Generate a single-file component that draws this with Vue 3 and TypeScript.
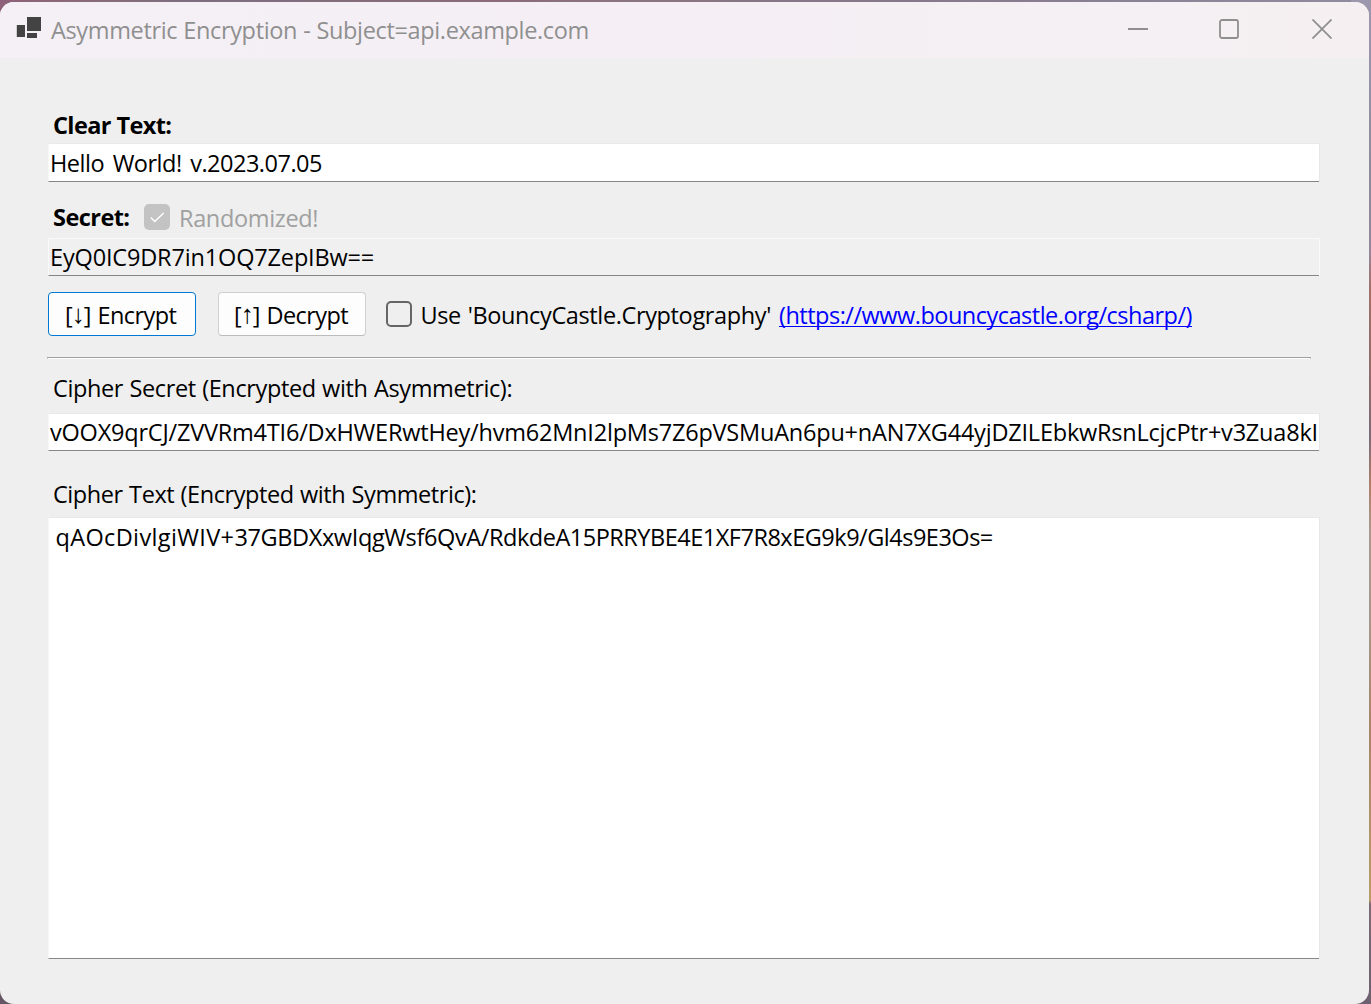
<script setup lang="ts">
import { ref } from 'vue'

const subject = 'api.example.com'
const clearText = ref('Hello World! v.2023.07.05')
const secret = ref('EyQ0IC9DR7in1OQ7ZepIBw==')
const cipherSecret = ref(
  'vOOX9qrCJ/ZVVRm4TI6/DxHWERwtHey/hvm62MnI2lpMs7Z6pVSMuAn6pu+nAN7XG44yjDZILEbkwRsnLcjcPtr+v3Zua8kI',
)
const cipherText = ref(['qAOcDivlgiWIV+', '37GBDXxwIqgWsf6QvA/', 'RdkdeA15PRRYBE4E1XF7R8xEG9k9/Gl4s9E3Os='])
</script>

<template>
  <div class="desktop">
    <div class="window">
      <header class="titlebar">
        <svg class="app-icon" width="26" height="24" viewBox="0 0 26 24">
          <rect x="0.8" y="11" width="8.2" height="12" />
          <rect x="11" y="3" width="14" height="14" />
          <rect x="11" y="19" width="10" height="5" />
        </svg>
        <span class="title">Asymmetric Encryption - Subject={{ subject }}</span>
        <div class="controls">
          <svg width="20" height="20" viewBox="0 0 20 20"><path d="M0 10H20" /></svg>
          <svg width="20" height="20" viewBox="0 0 20 20"><rect x="1" y="1" width="18" height="18" rx="2" /></svg>
          <svg width="20" height="20" viewBox="0 0 20 20"><path d="M0.5 0.5L19.5 19.5M19.5 0.5L0.5 19.5" /></svg>
        </div>
      </header>

      <main class="client">
        <div class="label bold clear-label">Clear Text:</div>
        <div class="field clear-field"><span class="clear-value">{{ clearText }}</span></div>

        <div class="secret-row">
          <span class="bold secret-label">Secret:</span>
          <span class="check checked">
            <svg width="26" height="26" viewBox="0 0 26 26"><path d="M6.8 13.6L10.8 17.6L19.6 9" /></svg>
          </span>
          <span class="randomized">Randomized!</span>
        </div>
        <div class="field readonly"><span class="secret-value">{{ secret }}</span></div>

        <div class="actions">
          <button class="btn primary">
            <span>[</span><span class="arrow">↓</span><span>]</span><span class="encrypt">Encrypt</span>
          </button>
          <button class="btn">
            <span>[</span><span class="arrow">↑</span><span>]</span><span class="decrypt">Decrypt</span>
          </button>
          <span class="check"></span>
          <span class="use-label">Use 'BouncyCastle.Cryptography'</span>
          <a class="link">(https://www.bouncycastle.org/csharp/)</a>
        </div>

        <div class="divider"></div>

        <div class="label cipher-secret-label">Cipher Secret (Encrypted with Asymmetric):</div>
        <div class="field"><span class="cipher-secret-value">{{ cipherSecret }}</span></div>

        <div class="label cipher-text-label">Cipher Text (Encrypted with Symmetric):</div>
        <div class="field area"><span v-for="(part, i) in cipherText" :key="i" :class="'part-' + i">{{ part }}</span></div>
      </main>
    </div>
  </div>
</template>

<style>
body {
  margin: 0;
  overflow: hidden;
}
</style>

<style scoped>
.desktop {
  box-sizing: border-box;
  width: 1371px;
  height: 1004px;
  padding: 2px 2px 0 0;
  background:
    linear-gradient(180deg, #9c97ac 0, #8f8a9a 180px, #95869a 250px, #a27068 290px, #8d6b6c 390px, #7a6b78 435px, #b07e6a 485px, #a99a8c 530px, #a5988a 620px, #aa8468 730px, #b39868 860px, #b89c68 900px, #7b6b76 904px, #6e6070 1004px) right / 20px 100% no-repeat,
    linear-gradient(90deg, #8e6079 0, #8a6a78 80px, #7c6e7e 190px, #836c7c 350px, #8c6b78 500px, #8b7480 620px, #85788a 900px, #918ba0 1371px) top / 100% 20px no-repeat,
    #655664;
  font: 23.5px/35px "Open Sans", "Noto Sans", sans-serif;
  color: #000;
  white-space: nowrap;
}
.window {
  width: 1369px;
  height: 1002px;
  background: #efefef;
  border-radius: 14px;
  overflow: hidden;
}
.titlebar {
  display: flex;
  height: 56px;
  background: linear-gradient(90deg, #f4f0f6, #f5eff5 45%, #f5f0f3 85%, #f5eff1);
  color: #8f8f8f;
}
.app-icon {
  margin: 12px 0 0 16px;
  fill: #434343;
}
.title {
  margin: 11px 0 0 9px;
  letter-spacing: -0.35px;
  word-spacing: 0.3px;
}
.controls {
  display: flex;
  margin: 17px 37px 0 auto;
}
.controls svg {
  margin-left: 71px;
  fill: none;
  stroke: #8f8f8f;
  stroke-width: 1.8;
}
.controls svg:last-child {
  margin-left: 73px;
}
.client {
  display: flex;
  flex-direction: column;
  padding: 50px 50px 0 48px;
}
.bold {
  font-weight: 700;
}
.label {
  height: 33px;
  padding-left: 5px;
}
.clear-label {
  margin-bottom: 2px;
  letter-spacing: -0.6px;
}
.field {
  box-sizing: border-box;
  height: 38px;
  padding: 1px 0 0 1px;
  background: #fff;
  border: solid;
  border-width: 1px 0 1px 1px;
  border-color: #e9e9e9 #e9e9e9 #868686 #f7f7f7;
  box-shadow: 1px 0 #e7e7e7;
  overflow: hidden;
}
.clear-field {
  height: 39px;
  padding-top: 2px;
}
.readonly {
  background: #f0f0f0;
  border-color: #f9f9f9 #f9f9f9 #868686;
  box-shadow: 1px 0 #f9f9f9;
}
.clear-value {
  letter-spacing: -0.5px;
  word-spacing: 3px;
}
.secret-row {
  display: flex;
  height: 33px;
  margin: 18px 0 5px;
  padding-left: 5px;
}
.secret-label {
  width: 91px;
  letter-spacing: -0.55px;
}
.check {
  box-sizing: border-box;
  flex: none;
  width: 26px;
  height: 26px;
  border: 2px solid #666;
  border-radius: 5px;
}
.check.checked {
  margin-top: 4px;
  border: 0;
  background: #c3c3c3;
}
.checked svg {
  display: block;
  fill: none;
  stroke: #fff;
  stroke-width: 1.4;
}
.randomized {
  margin: 1px 0 0 9px;
  color: #a0a0a0;
  letter-spacing: -0.35px;
}
.secret-value {
  letter-spacing: -0.16px;
}
.actions {
  display: flex;
  height: 44px;
  margin: 16px 0 21px;
}
.btn {
  box-sizing: border-box;
  display: flex;
  width: 148px;
  height: 44px;
  margin: 0 22px 0 0;
  padding: 5px 0 0 15px;
  background: #fdfdfd;
  border: 1px solid #d0d0d0;
  border-bottom-color: #bcbcbc;
  border-radius: 4px;
  font: inherit;
  color: #000;
}
.btn.primary {
  padding-left: 16px;
  border-color: #0078d4;
}
.arrow {
  display: flex;
  justify-content: center;
  width: 11px;
  margin-top: -1px;
  font-family: "Liberation Sans", sans-serif;
  font-size: 26px;
}
.encrypt {
  margin-left: 6px;
  letter-spacing: -0.55px;
}
.decrypt {
  margin-left: 6px;
  letter-spacing: -0.55px;
}
.actions .check {
  margin: 9px 0 0 -2px;
}
.use-label {
  width: 358px;
  margin: 6px 0 0 8.5px;
  letter-spacing: -0.37px;
  word-spacing: 1px;
}
.link {
  margin: 6px 0 0 0.5px;
  color: #00f;
  letter-spacing: -0.5px;
  text-decoration: underline;
  text-decoration-thickness: 1px;
  text-underline-offset: 2px;
  text-decoration-skip-ink: none;
}
.divider {
  box-sizing: border-box;
  width: 1264px;
  height: 2px;
  margin-left: -1px;
  border: 1px solid #a0a0a0;
  border-bottom-color: #fff;
}
.cipher-secret-label {
  margin: 12px 0 9px;
  letter-spacing: -0.38px;
  word-spacing: 0.7px;
}
.cipher-secret-value {
  letter-spacing: -0.21px;
}
.cipher-text-label {
  margin: 26px 0 7px;
  letter-spacing: -0.43px;
  word-spacing: 0.7px;
}
.area {
  height: 442px;
  padding: 2px 0 0 6.5px;
}
.part-0 {
  letter-spacing: 0.36px;
}
.part-1 {
  letter-spacing: -0.37px;
}
.part-2 {
  letter-spacing: -0.49px;
}
</style>
